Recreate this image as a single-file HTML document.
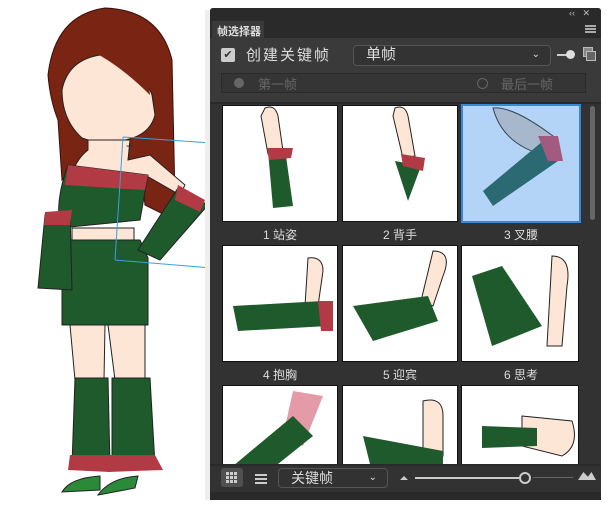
<!DOCTYPE html>
<html><head><meta charset="utf-8"><style>
*{margin:0;padding:0;box-sizing:border-box}
body{width:611px;height:509px;background:#fff;position:relative;overflow:hidden;font-family:"Liberation Sans","Noto Sans CJK SC",sans-serif}
.a{position:absolute}
.th{position:absolute;background:#fff;border:1px solid #111;overflow:hidden}
.lb{position:absolute;color:#ddd;font-size:12px;text-align:center;width:116px}
</style></head><body>
<!-- character -->
<svg class="a" style="left:0;top:0" width="212" height="509">
<path d="M48 75 Q55 15 105 8 Q160 10 172 60 L175 200 L165 215 L145 205 L140 160 L80 160 L62 180 L58 120 Q50 100 48 75Z" fill="#7a2414" stroke="#3a1008"/>
<path d="M62 90 Q68 60 100 55 Q140 60 152 95 L155 115 Q150 135 125 140 Q100 145 82 138 Q62 120 62 90Z" fill="#fde6d6" stroke="#222"/>
<path d="M60 55 Q100 15 145 45 L150 95 Q120 65 90 50 Q70 60 62 85Z" fill="#7a2414"/>
<path d="M88 140 L130 140 L128 160 L150 155 L185 185 L180 195 L145 175 L140 180 L70 180 Q75 160 88 150Z" fill="#fde6d6" stroke="#222"/>
<path d="M68 165 L148 175 L140 220 L60 228 Q55 200 68 165Z" fill="#1f5a2c" stroke="#222"/>
<path d="M68 165 L148 175 L145 190 L65 185Z" fill="#b23a45"/>
<rect x="72" y="228" width="62" height="14" fill="#fde6d6" stroke="#222"/>
<path d="M62 240 L140 240 L148 258 L148 325 L62 325Z" fill="#1f5a2c" stroke="#222"/>
<path d="M45 215 L70 212 L72 290 L38 288Z" fill="#1f5a2c" stroke="#222"/>
<path d="M45 212 L72 210 L70 225 L44 225Z" fill="#b23a45"/>
<path d="M178 188 L208 205 L160 260 L138 250Z" fill="#1f5a2c" stroke="#222"/>
<path d="M178 185 L205 200 L200 212 L175 200Z" fill="#b23a45"/>
<path d="M70 325 L105 325 L104 380 L75 380Z" fill="#fde6d6" stroke="#222"/>
<path d="M108 325 L145 325 L145 380 L115 380Z" fill="#fde6d6" stroke="#222"/>
<path d="M75 378 L108 378 L110 465 L72 465Z" fill="#1f5a2c" stroke="#222"/>
<path d="M112 378 L150 378 L155 465 L112 465Z" fill="#1f5a2c" stroke="#222"/>
<path d="M70 455 L110 455 L110 472 L68 470Z M110 455 L155 455 L163 470 L108 472Z" fill="#b23a45"/>
<path d="M62 492 Q70 478 100 476 L100 490Z M98 495 Q110 478 138 476 L135 488Z" fill="#2a8a3a" stroke="#222"/>
<line x1="123" y1="137" x2="212" y2="143" stroke="#39a0e0"/>
<line x1="123" y1="137" x2="115" y2="260" stroke="#39a0e0"/>
<line x1="115" y1="260" x2="212" y2="268" stroke="#39a0e0"/>
<text x="126" y="150" font-size="12" fill="#222">+</text>
</svg>
<div class="a" style="left:205px;top:10px;width:5px;height:490px;background:#eee"></div>
<!-- panel -->
<div class="a" style="left:210px;top:8px;width:391px;height:492px;background:#323232;border-radius:3px 3px 0 0"></div>
<div class="a" style="left:210px;top:8px;width:391px;height:13px;background:#2a2a2a;border-radius:3px 3px 0 0"></div>
<div class="a" style="left:569px;top:8px;color:#bbb;font-size:9px">‹‹&nbsp;&nbsp;&nbsp;✕</div>
<div class="a" style="left:210px;top:21px;width:391px;height:17px;background:#2a2a2a"></div>
<div class="a" style="left:212px;top:21px;width:52px;height:17px;background:#3a3a3a;color:#ddd;font-size:11px;font-weight:bold;padding:2px 0 0 5px">帧选择器</div>
<div class="a" style="left:585px;top:25px;width:11px;height:8px;border-top:2px solid #aaa;border-bottom:2px solid #aaa"><div style="border-top:2px solid #aaa;margin-top:1px"></div></div>
<div class="a" style="left:210px;top:38px;width:391px;height:64px;background:#3a3a3a"></div>
<div class="a" style="left:221px;top:48px;width:14px;height:14px;background:#ccc;border-radius:2px;color:#333;font-size:11px;text-align:center;line-height:14px">✔</div>
<div class="a" style="left:246px;top:44px;color:#ddd;font-size:15px;letter-spacing:2px">创建关键帧</div>
<div class="a" style="left:353px;top:45px;width:198px;height:21px;border:1px solid #555;border-radius:4px;background:#333;color:#ddd;font-size:15px;padding:0 0 0 12px;line-height:18px">单帧<span style="position:absolute;right:10px;font-size:10px">⌄</span></div>
<div class="a" style="left:557px;top:54px;width:10px;height:2px;background:#ccc"></div>
<div class="a" style="left:566px;top:50px;width:9px;height:9px;border-radius:50%;background:#ddd"></div>
<div class="a" style="left:583px;top:47px;width:10px;height:10px;background:#888;border:1px solid #bbb"></div>
<div class="a" style="left:586px;top:51px;width:10px;height:10px;background:#666;border:1px solid #bbb"></div>
<div class="a" style="left:221px;top:73px;width:365px;height:20px;border:1px solid #2a2a2a;background:#353535"></div>
<div class="a" style="left:234px;top:78px;width:10px;height:10px;border-radius:50%;background:#666"></div>
<div class="a" style="left:258px;top:74px;color:#666;font-size:13px">第一帧</div>
<div class="a" style="left:477px;top:78px;width:11px;height:11px;border-radius:50%;border:1px solid #666"></div>
<div class="a" style="left:501px;top:74px;color:#666;font-size:13px">最后一帧</div>
<div class="a" style="left:210px;top:102px;width:391px;height:2px;background:#2a2a2a"></div>
<!-- grid -->
<div class="a" style="left:590px;top:106px;width:5px;height:114px;background:#666;border-radius:3px"></div>
<div class="th" style="left:222px;top:105px;width:116px;height:117px"><svg width="116" height="117"><path d="M42 2 Q52 -2 55 10 L60 45 L45 48 L38 10Z" fill="#fde6d6" stroke="#222"/><path d="M45 45 L62 43 L70 100 L50 102Z" fill="#1f5a2c"/><path d="M44 42 L70 42 L68 52 L46 54Z" fill="#b23a45"/></svg></div>
<div class="th" style="left:342px;top:105px;width:116px;height:117px"><svg width="116" height="117"><path d="M52 2 Q62 -2 65 10 L72 50 L60 52 L50 10Z" fill="#fde6d6" stroke="#222"/><path d="M52 55 L78 60 L65 95Z" fill="#1f5a2c"/><path d="M58 48 L82 52 L80 65 L60 60Z" fill="#b23a45"/></svg></div>
<div class="th" style="left:461px;top:104px;width:120px;height:119px;background:#b3d4f7;border:2px solid #3a86d8"><svg width="116" height="115"><path d="M30 2 Q50 0 90 30 L85 50 Q40 40 30 2Z" fill="#a8b8cc" stroke="#345"/><path d="M80 35 L95 55 L30 100 L20 85Z" fill="#2b6a72"/><path d="M75 30 L95 30 L100 55 L85 55Z" fill="#a25a80"/></svg></div>
<div class="lb" style="left:222px;top:226px">1 站姿</div>
<div class="lb" style="left:342px;top:226px">2 背手</div>
<div class="lb" style="left:463px;top:226px">3 叉腰</div>
<div class="th" style="left:222px;top:245px;width:116px;height:117px"><svg width="116" height="117"><path d="M85 12 Q100 10 100 25 L95 60 L82 60Z" fill="#fde6d6" stroke="#222"/><path d="M10 60 L100 55 L105 80 L15 85Z" fill="#1f5a2c"/><path d="M95 55 L110 55 L110 85 L98 85Z" fill="#b23a45"/></svg></div>
<div class="th" style="left:342px;top:245px;width:116px;height:117px"><svg width="116" height="117"><path d="M90 5 Q110 5 100 30 L90 60 L78 55Z" fill="#fde6d6" stroke="#222"/><path d="M10 60 L85 50 L95 75 L30 95Z" fill="#1f5a2c"/></svg></div>
<div class="th" style="left:461px;top:245px;width:118px;height:117px"><svg width="116" height="117"><path d="M90 10 Q110 10 105 40 L100 100 L85 100Z" fill="#fde6d6" stroke="#222"/><path d="M10 30 L40 20 L80 80 L30 100Z" fill="#1f5a2c"/></svg></div>
<div class="lb" style="left:222px;top:366px">4 抱胸</div>
<div class="lb" style="left:342px;top:366px">5 迎宾</div>
<div class="lb" style="left:463px;top:366px">6 思考</div>
<div class="th" style="left:222px;top:385px;width:116px;height:90px"><svg width="116" height="90"><path d="M70 5 L100 10 L80 60 L60 50Z" fill="#e59aa8"/><path d="M10 80 L70 30 L90 50 L40 90Z" fill="#1f5a2c"/></svg></div>
<div class="th" style="left:342px;top:385px;width:116px;height:90px"><svg width="116" height="90"><path d="M80 15 Q100 10 100 30 L100 70 L80 70Z" fill="#fde6d6" stroke="#222"/><path d="M20 50 L100 65 L100 90 L30 90Z" fill="#1f5a2c"/></svg></div>
<div class="th" style="left:461px;top:385px;width:118px;height:90px"><svg width="116" height="90"><path d="M60 30 L110 35 Q118 60 100 70 L60 60Z" fill="#fde6d6" stroke="#222"/><path d="M20 40 L75 42 L75 60 L20 62Z" fill="#1f5a2c"/></svg></div>
<!-- bottom bar -->
<div class="a" style="left:210px;top:464px;width:391px;height:36px;background:#323232;border-top:2px solid #2a2a2a"></div>
<div class="a" style="left:221px;top:468px;width:22px;height:19px;background:#505050;border-radius:3px;padding:3px 5px"><div style="width:12px;height:12px;background:repeating-linear-gradient(90deg,#ccc 0 3px,transparent 3px 4px),#505050;-webkit-mask:repeating-linear-gradient(0deg,#000 0 3px,transparent 3px 4px)"></div></div>
<div class="a" style="left:255px;top:472px;width:12px;height:12px;background:repeating-linear-gradient(0deg,#ccc 0 2px,transparent 2px 4px)"></div>
<div class="a" style="left:278px;top:468px;width:110px;height:20px;border:1px solid #555;border-radius:4px;color:#ddd;font-size:14px;padding-left:12px;line-height:18px">关键帧<span style="position:absolute;right:10px;font-size:10px">⌄</span></div>
<div class="a" style="left:400px;top:476px;width:8px;height:4px;background:#ccc;clip-path:polygon(50% 0,100% 100%,0 100%)"></div>
<div class="a" style="left:415px;top:477px;width:104px;height:2px;background:#ccc"></div>
<div class="a" style="left:519px;top:472px;width:12px;height:12px;border-radius:50%;border:2px solid #ccc"></div>
<div class="a" style="left:533px;top:477px;width:40px;height:1px;background:#666"></div>
<div class="a" style="left:578px;top:472px;width:18px;height:8px;background:#ccc;clip-path:polygon(30% 0,55% 60%,75% 0,100% 100%,0 100%)"></div>
<div class="a" style="left:210px;top:492px;width:391px;height:8px;background:#2a2a2a"></div>
</body></html>
